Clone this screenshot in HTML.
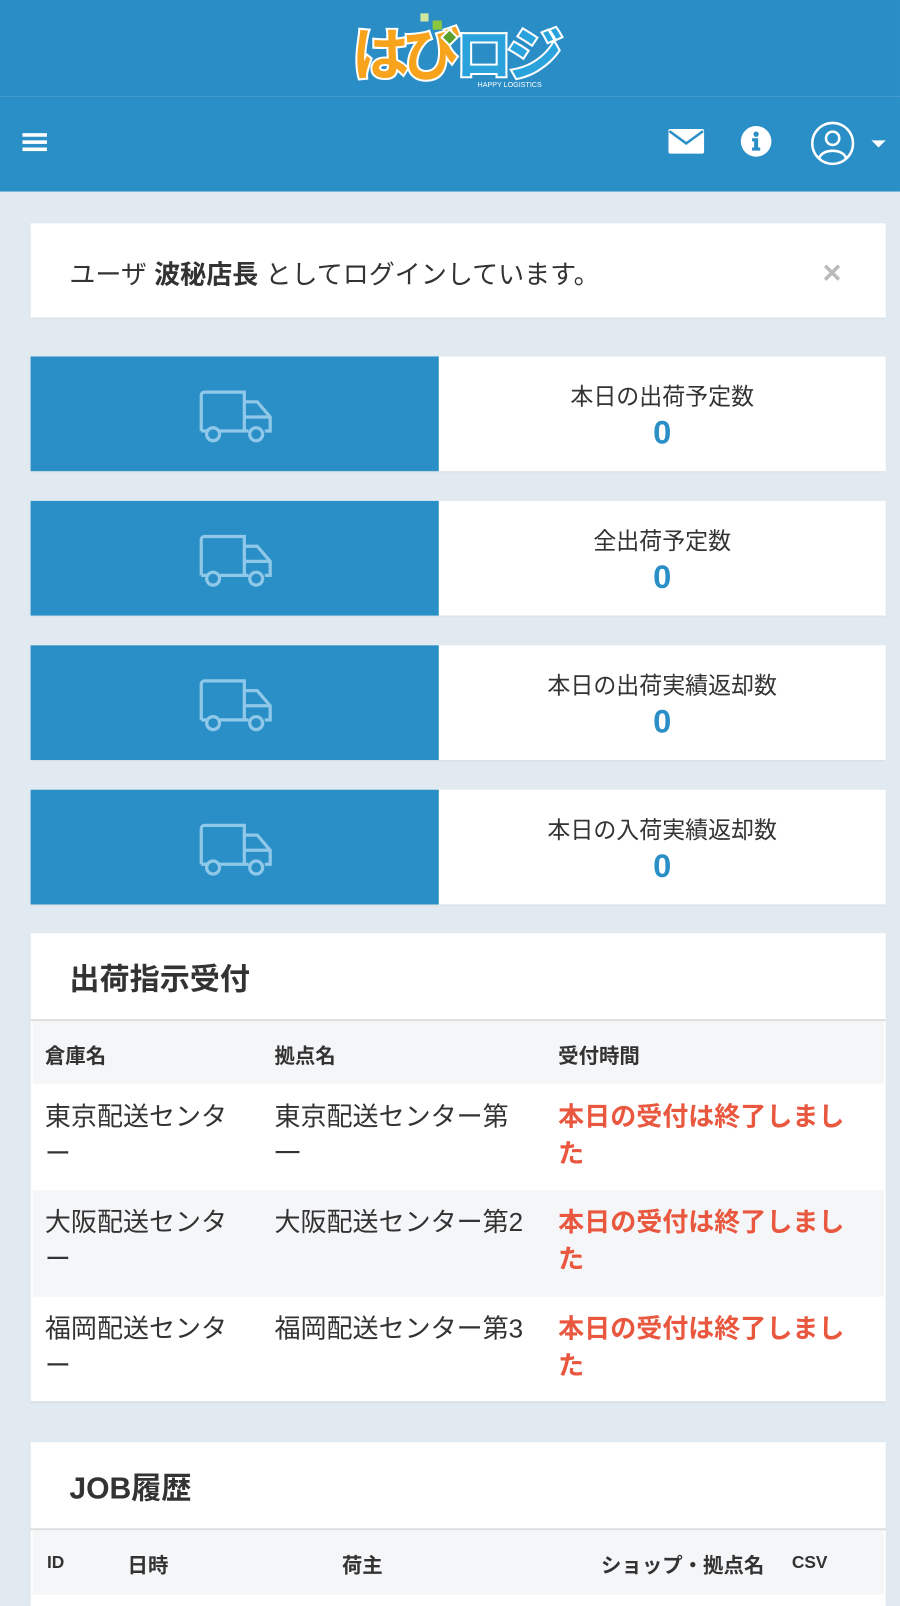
<!DOCTYPE html>
<html><head><meta charset="utf-8"><style>
html,body{margin:0;padding:0;width:900px;height:1600px;overflow:hidden;background:#e1eaf0}
#w{position:absolute;left:0;top:0;width:882px;height:1562px;transform:scale(1.0204,1.0243);transform-origin:0 0;font-family:"Liberation Sans","Noto Sans CJK JP",sans-serif;color:#333}
.a{position:absolute}
.top{left:0;top:0;width:882px;height:94px;background:#2a8dc5}
.nav{left:0;top:94px;width:882px;height:93px;background:#2a8fc6}
.box{background:#fff;box-shadow:0 1px 2px rgba(0,0,0,.08)}
.card{left:30px;width:838px;height:112px}
.card .b{position:absolute;left:0;top:0;width:400px;height:112px;background:#2a8fc6}
.card .l{position:absolute;left:400px;right:0;top:22px;text-align:center;font-size:22.5px;color:#333}
.card .n{position:absolute;left:400px;right:0;top:56px;text-align:center;font-size:32px;font-weight:bold;color:#2a8fc6}
.card svg{position:absolute;left:163px;top:30px}
.red{color:#e9573f;font-weight:bold}
.t{font-size:25.5px;line-height:36px;white-space:nowrap}
.h{font-size:20px;font-weight:bold}
</style></head><body><div id="w">
<div class="a top">
 <div class="a" style="left:345px;top:18px;font-size:56px;font-weight:bold;color:#f7a31c;letter-spacing:-6px;-webkit-text-stroke:4px #fff;paint-order:stroke;font-family:'Noto Sans CJK JP',sans-serif;line-height:64px">はび</div>
 <div class="a" style="left:446px;top:18px;font-size:56px;font-weight:bold;color:#2aa3dd;letter-spacing:-6px;-webkit-text-stroke:4px #fff;paint-order:stroke;font-family:'Noto Sans CJK JP',sans-serif;line-height:64px">ロジ</div>
 <div class="a" style="left:412px;top:13px;width:8px;height:8px;background:#cfe7a0"></div>
 <div class="a" style="left:424px;top:20px;width:9px;height:9px;background:#8cc63f"></div>
 <div class="a" style="left:434px;top:30px;width:9px;height:9px;background:#5aa02c;border:2px solid #fff;transform:rotate(45deg)"></div>
 <div class="a" style="left:468px;top:80px;font-size:7px;color:#fff">HAPPY LOGISTICS</div>
</div>
<div class="a nav">
 <svg class="a" style="left:22px;top:34px" width="25" height="22" viewBox="0 0 25 22"><rect y="2" width="24" height="3.5" fill="#fff"/><rect y="9" width="24" height="3.5" fill="#fff"/><rect y="16" width="24" height="3.5" fill="#fff"/></svg>
 <svg class="a" style="left:655px;top:30px" width="36" height="28" viewBox="0 0 36 28"><rect x="0" y="2" width="35" height="24" rx="2" fill="#fff"/><path d="M1 4 L17.5 16 L34 4" fill="none" stroke="#2a8fc6" stroke-width="2.5"/></svg>
 <svg class="a" style="left:725px;top:28px" width="32" height="32" viewBox="0 0 32 32"><circle cx="16" cy="16" r="15" fill="#fff"/><circle cx="16" cy="9" r="2.6" fill="#2a8fc6"/><path d="M12 13h6v9h2v3h-8v-3h2v-6h-2z" fill="#2a8fc6"/></svg>
 <svg class="a" style="left:794px;top:24px" width="80" height="44" viewBox="0 0 80 44"><circle cx="22" cy="22" r="20" fill="none" stroke="#fff" stroke-width="2.5"/><circle cx="22" cy="17" r="6.5" fill="none" stroke="#fff" stroke-width="2.5"/><path d="M9 36 C12 27 32 27 35 36" fill="none" stroke="#fff" stroke-width="2.5"/><path d="M60 19 h14 l-7 7z" fill="#fff"/></svg>
</div>
<div class="a box" style="left:30px;top:218px;width:838px;height:92px">
 <div class="a" style="left:38px;top:30px;font-size:25.5px;color:#333;white-space:nowrap">ユーザ <b>波秘店長</b> としてログインしています。</div>
 <div class="a" style="left:776px;top:30px;font-size:32px;color:#bbb;font-weight:bold">×</div>
</div>
<div class="a box card" style="top:348px"><div class="b"></div><svg width="76" height="56" viewBox="0 0 72 52" fill="none" stroke="#8fc8e9" stroke-width="3"><path d="M4 40V7a3 3 0 0 1 3-3h37v36M44 13h12l12 14v13h-5M44 27h24M21 40h27"/><path d="M4 40h6"/><circle cx="15" cy="43" r="6"/><circle cx="55" cy="43" r="6"/></svg><div class="l">本日の出荷予定数</div><div class="n">0</div></div>
<div class="a box card" style="top:489px"><div class="b"></div><svg width="76" height="56" viewBox="0 0 72 52" fill="none" stroke="#8fc8e9" stroke-width="3"><path d="M4 40V7a3 3 0 0 1 3-3h37v36M44 13h12l12 14v13h-5M44 27h24M21 40h27"/><path d="M4 40h6"/><circle cx="15" cy="43" r="6"/><circle cx="55" cy="43" r="6"/></svg><div class="l">全出荷予定数</div><div class="n">0</div></div>
<div class="a box card" style="top:630px"><div class="b"></div><svg width="76" height="56" viewBox="0 0 72 52" fill="none" stroke="#8fc8e9" stroke-width="3"><path d="M4 40V7a3 3 0 0 1 3-3h37v36M44 13h12l12 14v13h-5M44 27h24M21 40h27"/><path d="M4 40h6"/><circle cx="15" cy="43" r="6"/><circle cx="55" cy="43" r="6"/></svg><div class="l">本日の出荷実績返却数</div><div class="n">0</div></div>
<div class="a box card" style="top:771px"><div class="b"></div><svg width="76" height="56" viewBox="0 0 72 52" fill="none" stroke="#8fc8e9" stroke-width="3"><path d="M4 40V7a3 3 0 0 1 3-3h37v36M44 13h12l12 14v13h-5M44 27h24M21 40h27"/><path d="M4 40h6"/><circle cx="15" cy="43" r="6"/><circle cx="55" cy="43" r="6"/></svg><div class="l">本日の入荷実績返却数</div><div class="n">0</div></div>

<div class="a box" style="left:30px;top:911px;width:838px;height:457px">
 <div class="a" style="left:38px;top:22px;font-size:29.5px;font-weight:bold">出荷指示受付</div>
 <div class="a" style="left:0;top:84px;width:838px;height:2px;background:#ddd"></div>
 <div class="a" style="left:2px;top:86px;width:834px;height:61px;background:#f4f6f8"></div>
 <div class="a h" style="left:14px;top:104px">倉庫名</div>
 <div class="a h" style="left:239px;top:104px">拠点名</div>
 <div class="a h" style="left:517px;top:104px">受付時間</div>
 <div class="a" style="left:2px;top:251px;width:834px;height:104px;background:#f4f6f8"></div>
 <div class="a t" style="left:14px;top:162px">東京配送センタ<br>ー</div>
 <div class="a t" style="left:239px;top:162px">東京配送センター第<br>一</div>
 <div class="a t red" style="left:517px;top:162px">本日の受付は終了しまし<br>た</div>
 <div class="a t" style="left:14px;top:265px">大阪配送センタ<br>ー</div>
 <div class="a t" style="left:239px;top:265px">大阪配送センター第2</div>
 <div class="a t red" style="left:517px;top:265px">本日の受付は終了しまし<br>た</div>
 <div class="a t" style="left:14px;top:369px">福岡配送センタ<br>ー</div>
 <div class="a t" style="left:239px;top:369px">福岡配送センター第3</div>
 <div class="a t red" style="left:517px;top:369px">本日の受付は終了しまし<br>た</div>
</div>

<div class="a box" style="left:30px;top:1408px;width:838px;height:160px">
 <div class="a" style="left:38px;top:22px;font-size:29.5px;font-weight:bold">JOB履歴</div>
 <div class="a" style="left:0;top:84px;width:838px;height:2px;background:#ddd"></div>
 <div class="a" style="left:2px;top:86px;width:834px;height:63px;background:#f4f6f8"></div>
 <div class="a" style="left:16px;top:108px;font-size:17px;font-weight:bold">ID</div>
 <div class="a h" style="left:95px;top:104px">日時</div>
 <div class="a h" style="left:305px;top:104px">荷主</div>
 <div class="a h" style="left:559px;top:104px">ショップ・拠点名</div>
 <div class="a" style="left:746px;top:108px;font-size:17px;font-weight:bold">CSV</div>
</div>
</div></body></html>
